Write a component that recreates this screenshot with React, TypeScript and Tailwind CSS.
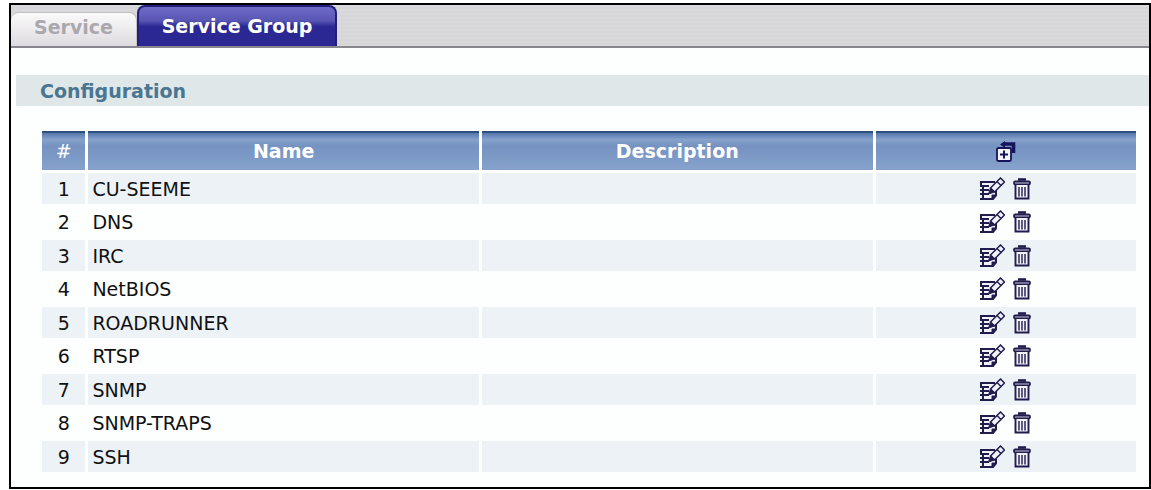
import React from 'react'

const AddIcon = () => (
  <svg width="20" height="22" viewBox="0 0 20 22" fill="none" aria-hidden="true">
    <path d="M7 3H17.500V12" stroke="#17155a" strokeWidth="3.600" />
    <path d="M4 3.500L9 0V7Z" fill="#17155a" />
    <rect x="1" y="7" width="14" height="13" rx="1.500" fill="#f4f4fc" stroke="#17155a" strokeWidth="1.800" />
    <path d="M4 13.500H12M8 9.500V17.500" stroke="#17155a" strokeWidth="2" />
  </svg>
)

const EditIcon = () => (
  <svg width="25" height="24" viewBox="0 0 25 24" fill="none" stroke="#201c4c" aria-hidden="true">
    <path d="M2 5H16V18.500L12.500 22H2Z" fill="#f2f2fb" stroke="none" />
    <path d="M0 5H15M1 4V9M0 9H9M0 13H9M0 17H9M3 9V22M0 22H13L16 18.500V13" strokeWidth="2" />
    <path d="M12 22V18H16Z" fill="#201c4c" strokeWidth="1" />
    <path d="M10.500 11L20.500 1L24.500 5L14.500 15Z" fill="#f2f2fb" strokeWidth="1.500" />
    <path d="M17 4.500L21 8.500" strokeWidth="1.500" />
    <path d="M8.500 17L10.500 11L14.500 15Z" fill="#201c4c" />
  </svg>
)

const TrashIcon = () => (
  <svg width="18" height="22" viewBox="0 0 18 22" fill="none" stroke="#201c4c" aria-hidden="true">
    <path d="M5 1.500H13" strokeWidth="2.600" />
    <rect x="1" y="3.500" width="16" height="3" rx="1.200" fill="#c9c8dc" strokeWidth="1.800" />
    <path d="M2.500 7V20.500H15.500V7" fill="#f2f2fb" strokeWidth="1.900" />
    <path d="M6 9V18.500M9 9V18.500M12 9V18.500" strokeWidth="1.400" />
  </svg>
)

const App = () => {
  const groups = [
    { name: 'CU-SEEME', description: '' },
    { name: 'DNS', description: '' },
    { name: 'IRC', description: '' },
    { name: 'NetBIOS', description: '' },
    { name: 'ROADRUNNER', description: '' },
    { name: 'RTSP', description: '' },
    { name: 'SNMP', description: '' },
    { name: 'SNMP-TRAPS', description: '' },
    { name: 'SSH', description: '' },
  ]

  const headCell =
    'h-[39px] p-0 text-white border-t-2 border-[#2d4f7c] bg-[linear-gradient(to_bottom,#5678ae_0%,#86a1cc_18%,#7592c1_35%,#86a2cc_100%)]'

  return (
    <div className="bg-white pt-[3px] pl-[9px] pb-px font-['DejaVu_Sans',Verdana,sans-serif] text-[#111111]">
      <div className="border-2 border-black bg-[#fdfefe]">
        {/* Tabs */}
        <nav className="flex items-end h-[43px] border-b-2 border-[#89878e] bg-[repeating-linear-gradient(to_bottom,#dad9dc_0px,#dad9dc_2px,#d6d5d8_2px,#d6d5d8_4px)]">
          <button
            type="button"
            className="w-[126px] h-[34px] pb-1 rounded-t-lg border-t border-r border-[#c3c1c6] bg-linear-to-b from-[#fafafa] to-[#dedbe0] text-[19px] font-bold text-[#aaa8ac] text-center"
          >
            Service
          </button>
          <button
            type="button"
            className="w-[200px] h-[41px] rounded-t-lg border-2 border-b-0 border-[#211e7c] bg-linear-to-b from-[#6e6cc6] from-0% via-[#5956b4] via-35% to-[#2b2894] to-50% text-[19px] font-bold text-white text-center"
          >
            Service Group
          </button>
        </nav>

        {/* Section title */}
        <h2 className="mt-[27px] ml-[5px] pl-6 h-[31px] leading-[32px] bg-[#dfe7e8] text-[19px] font-bold text-[#4a7692]">
          Configuration
        </h2>

        <div className="pt-[22px] pl-7 pr-[10px] pb-3">
          <table className="w-full table-fixed border-separate border-spacing-[3px] text-[19px]">
            <colgroup>
              <col className="w-[4%]" />
              <col className="w-[36%]" />
              <col className="w-[36%]" />
              <col className="w-[24%]" />
            </colgroup>
            <thead>
              <tr>
                <th className={`${headCell} font-normal`}>#</th>
                <th className={`${headCell} font-bold`}>Name</th>
                <th className={`${headCell} font-bold`}>Description</th>
                <th className={headCell}>
                  <button type="button" aria-label="Add service group" className="block mx-auto">
                    <AddIcon />
                  </button>
                </th>
              </tr>
            </thead>
            <tbody>
              {groups.map((group, index) => (
                <tr key={group.name} className="h-[30px] odd:h-[31px] odd:bg-[#edf2f6]">
                  <td className="p-0 text-center leading-6">{index + 1}</td>
                  <td className="py-0 pl-1 pr-0 leading-6">{group.name}</td>
                  <td className="p-0">{group.description}</td>
                  <td className="p-0">
                    <div className="flex items-center justify-center gap-2">
                      <button type="button" aria-label={`Edit ${group.name}`}>
                        <EditIcon />
                      </button>
                      <button type="button" aria-label={`Delete ${group.name}`}>
                        <TrashIcon />
                      </button>
                    </div>
                  </td>
                </tr>
              ))}
            </tbody>
          </table>
        </div>
      </div>
    </div>
  )
}

export default App
